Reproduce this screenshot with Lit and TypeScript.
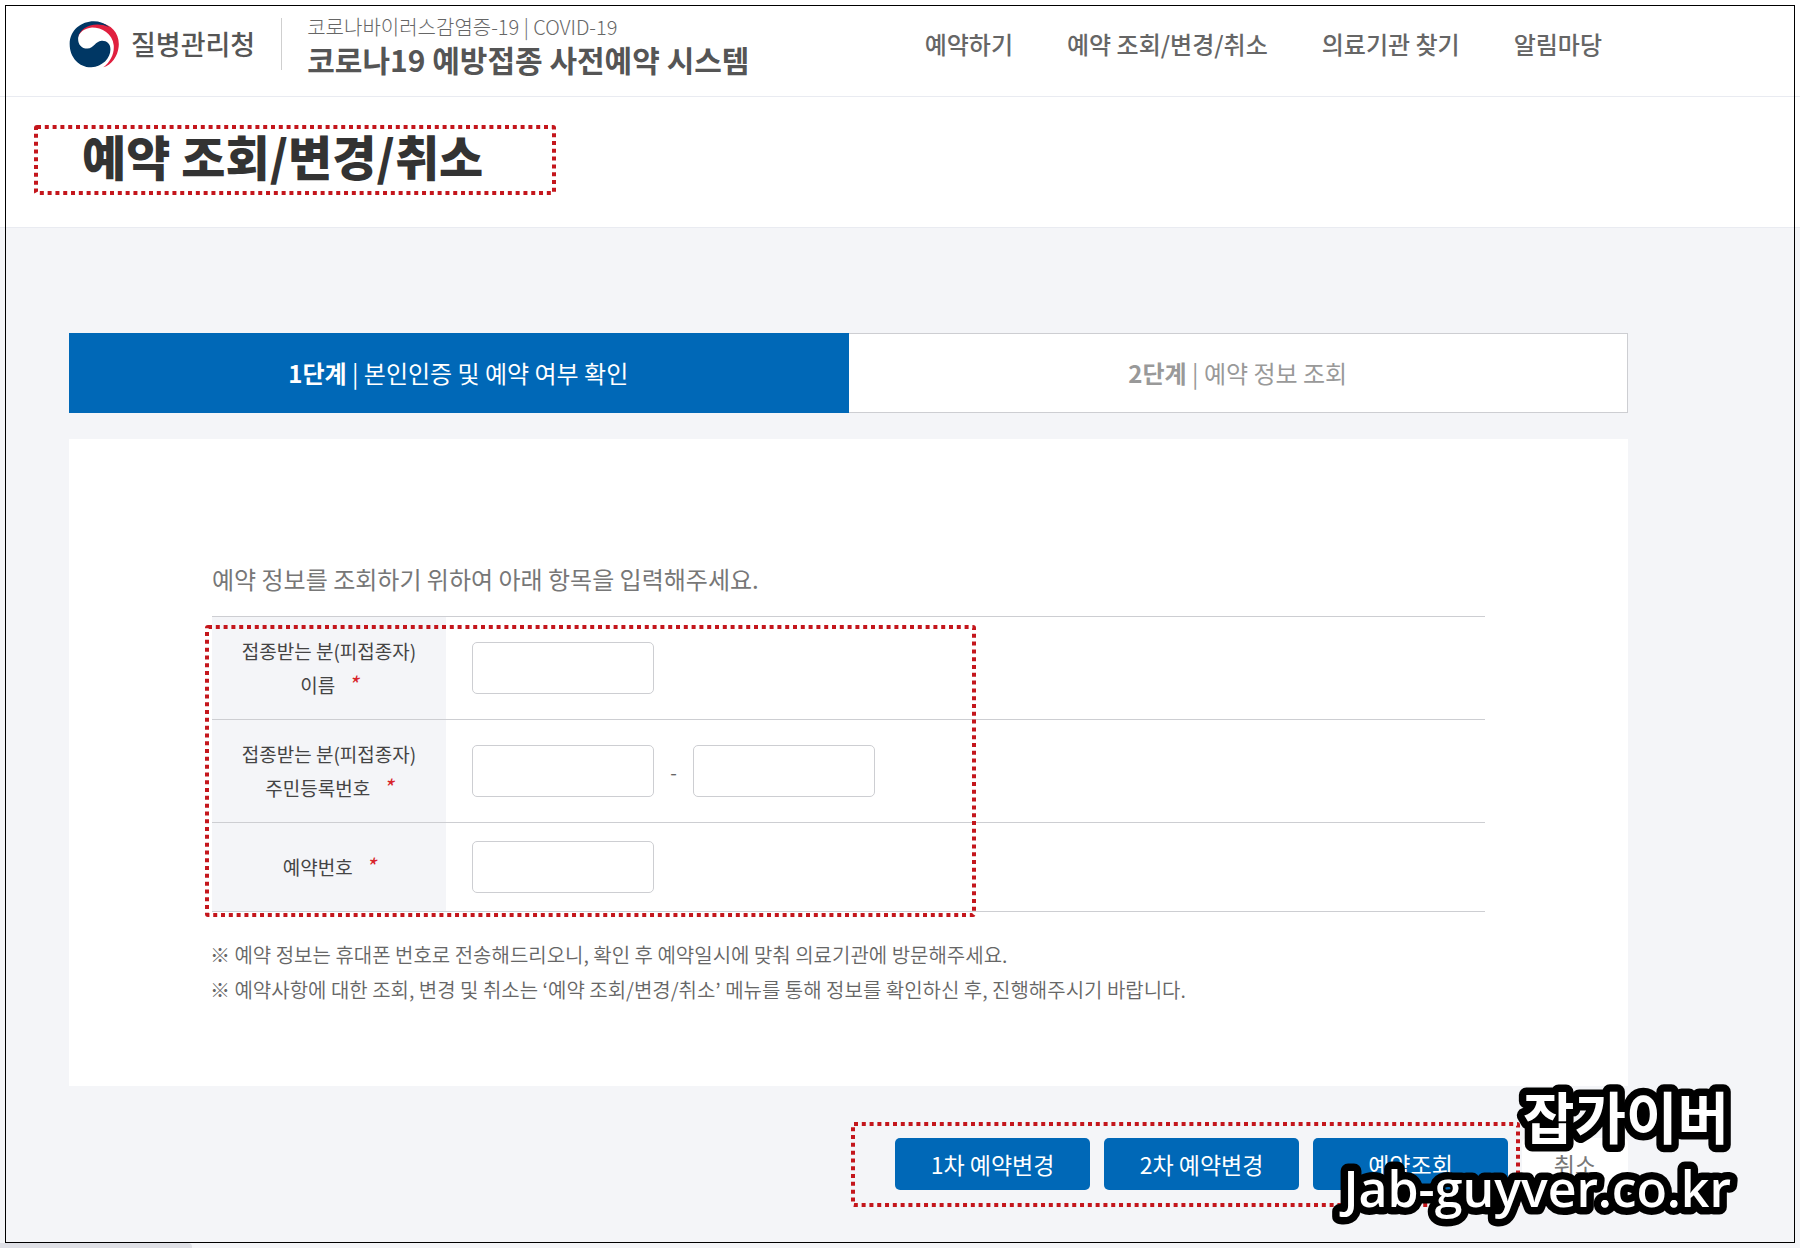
import { LitElement, html, css, svg } from "lit";
import { customElement } from "lit/decorators.js";

const NAV = ["예약하기", "예약 조회/변경/취소", "의료기관 찾기", "알림마당"];

const FIELDS = [
  { id: "name", lines: ["접종받는 분(피접종자)", "이름"], parts: ["이름"] },
  { id: "rrn", lines: ["접종받는 분(피접종자)", "주민등록번호"], parts: ["주민등록번호 앞자리", "주민등록번호 뒷자리"] },
  { id: "code", lines: ["예약번호"], parts: ["예약번호"] },
];

const NOTES = [
  "※ 예약 정보는 휴대폰 번호로 전송해드리오니, 확인 후 예약일시에 맞춰 의료기관에 방문해주세요.",
  "※ 예약사항에 대한 조회, 변경 및 취소는 ‘예약 조회/변경/취소’ 메뉴를 통해 정보를 확인하신 후, 진행해주시기 바랍니다.",
];

const ACTIONS = ["1차 예약변경", "2차 예약변경", "예약조회"];

@customElement("dotted-box")
export class DottedBox extends LitElement {
  static styles = css`
    :host {
      display: block;
      pointer-events: none;
    }
    .line {
      display: block;
      width: 100%;
      height: 100%;
      overflow: visible;
      fill: none;
      stroke: #c4161c;
      stroke-width: 4;
      stroke-dasharray: 4 3.8;
    }
  `;
  render() {
    return html`<svg class="line" aria-hidden="true">${svg`<rect width="100%" height="100%" rx="1"></rect>`}</svg>`;
  }
}

@customElement("app-root")
export class AppRoot extends LitElement {
  static styles = css`
    :host {
      display: block;
      position: relative;
      box-sizing: border-box;
      min-height: 100vh;
      overflow: hidden;
      background: #f4f5f8;
      color: #666;
      font-family: "Noto Sans CJK KR", "Noto Sans", sans-serif;
      --gutter-left: 69px;
      --gutter-right: 172px;
      --blue: #0068b7;
      --line: #cdced2;
    }
    * {
      box-sizing: border-box;
    }
    .frame {
      position: absolute;
      inset: 5px 5px 5px 5px;
      border: 1px solid #000;
      pointer-events: none;
    }
    .scroll {
      position: absolute;
      left: 0;
      bottom: 0;
      width: 192px;
      height: 5px;
      border-top-right-radius: 4px;
      background: #dfe0e6;
    }
    .header {
      display: flex;
      align-items: center;
      height: 97px;
      padding: 0 198px 9px var(--gutter-left);
      border-bottom: 1px solid #e9ebf1;
      background: #fff;
    }
    .logo {
      display: flex;
      align-items: center;
      gap: 12px;
      padding-right: 26px;
      color: #555;
      font-size: 27px;
      font-weight: 500;
      line-height: 52px;
      text-decoration: none;
      border-right: 1px solid #cfcfcf;
    }
    .mark {
      width: 50px;
      height: 50px;
    }
    .system {
      display: flex;
      flex-direction: column;
      padding: 4px 0 0 25px;
    }
    .eyebrow {
      font-size: 20px;
      font-weight: 300;
      line-height: 26px;
    }
    .name {
      color: #555;
      font-size: 30px;
      font-weight: 700;
      line-height: 38px;
    }
    .nav {
      display: flex;
      gap: 54px;
      margin-left: auto;
    }
    .nav a {
      color: #666;
      font-size: 24px;
      font-weight: 500;
      line-height: 36px;
      text-decoration: none;
      white-space: nowrap;
    }
    .hero {
      position: relative;
      height: 131px;
      padding: 26px 82px;
      border-bottom: 1px solid #e9ebf1;
      background: #fff;
    }
    .hero h1 {
      margin: 0;
      color: #333;
      font-size: 48px;
      font-weight: 900;
      line-height: 64px;
    }
    .mark-title {
      position: absolute;
      left: 36px;
      top: 30px;
      width: 518px;
      height: 66px;
    }
    .main {
      padding: 105px var(--gutter-right) 58px var(--gutter-left);
    }
    .steps {
      display: grid;
      grid-template-columns: 1fr 1fr;
      margin: 0 0 26px;
      padding: 0;
      list-style: none;
    }
    .step {
      height: 80px;
      border: 1px solid var(--line);
      border-left: 0;
      background: #fff;
      color: #999;
      font-size: 24px;
      line-height: 78px;
      text-align: center;
    }
    .step.on {
      border-color: var(--blue);
      background: var(--blue);
      color: #fff;
    }
    .step b {
      font-weight: 700;
    }
    .card {
      padding: 120px 143px 79px;
      background: #fff;
    }
    .lead {
      margin: 0 0 17px;
      color: #777;
      font-size: 24px;
      line-height: 40px;
    }
    .form {
      position: relative;
    }
    .table {
      width: 100%;
      border-collapse: separate;
      border-spacing: 0;
      border-top: 1px solid var(--line);
    }
    .table th,
    .table td {
      border-bottom: 1px solid var(--line);
      text-align: center;
    }
    .table th {
      width: 234px;
      padding: 17px 0;
      background: #f4f5f8;
      color: #444;
      font-size: 19px;
      font-weight: 400;
      line-height: 34px;
    }
    .label {
      display: block;
    }
    .req {
      padding-left: 8px;
      color: #d8232a;
      font-size: 22px;
      font-style: italic;
      line-height: 1;
    }
    .table td {
      padding: 18px 26px;
    }
    .inputs {
      display: flex;
      align-items: center;
    }
    .inputs input {
      width: 182px;
      height: 52px;
      padding: 0 12px;
      border: 1px solid var(--line);
      border-radius: 5px;
      background: #fff;
      font: inherit;
      font-size: 19px;
    }
    .dash {
      width: 39px;
      font-size: 19px;
    }
    .mark-form {
      position: absolute;
      left: -5px;
      top: 11px;
      width: 767px;
      height: 288px;
    }
    .notes {
      margin: 25px -2px 0;
      padding: 0;
      list-style: none;
      font-size: 20px;
      font-weight: 350;
      line-height: 35px;
    }
    .actions {
      position: relative;
      display: flex;
      justify-content: flex-end;
      gap: 14px;
      margin-top: 52px;
    }
    .btn {
      width: 195px;
      height: 52px;
      padding: 0;
      border: 0;
      border-radius: 5px;
      background: var(--blue);
      color: #fff;
      font: inherit;
      font-size: 23px;
      line-height: 52px;
    }
    .btn.cancel {
      width: 106px;
      background: #fff;
      color: #777;
    }
    .mark-actions {
      position: absolute;
      right: 110px;
      top: -14px;
      width: 665px;
      height: 81px;
    }
    .watermark {
      position: absolute;
      right: 60px;
      bottom: 8px;
      width: 420px;
      height: 160px;
      overflow: visible;
      fill: #fff;
      stroke: #000;
      stroke-width: 15px;
      stroke-linejoin: round;
      paint-order: stroke fill;
      text-anchor: end;
      pointer-events: none;
    }
    .wm-ko {
      font-size: 56px;
      font-weight: 700;
    }
    .wm-en {
      font-family: "Open Sans", "Noto Sans", sans-serif;
      font-size: 50px;
      font-weight: 600;
    }
  `;

  private logo() {
    return svg`<svg class="mark" viewBox="58 25 152 150" aria-hidden="true">
      <path fill="#e0203f" d="M84 84 C84 54 112 32 148 35 C190 40 213 72 209 108 C206 138 188 162 162 171 C184 154 196 130 194 104 C190 68 158 50 128 50 C104 52 88 66 84 84Z"></path>
      <path fill="#003764" d="M180 49 C140 10 60 36 60 100 C60 142 90 172 126 171 C160 168 184 144 184 116 C184 98 172 89 157 90 C138 92 134 112 114 114 C94 114 84 98 86 80 C90 52 134 28 180 49Z"></path>
    </svg>`;
  }

  render() {
    return html`
      <header class="header">
        <a class="logo" href="#">${this.logo()}<span>질병관리청</span></a>
        <div class="system">
          <span class="eyebrow">코로나바이러스감염증-19 | COVID-19</span>
          <span class="name">코로나19 예방접종 사전예약 시스템</span>
        </div>
        <nav class="nav">${NAV.map((n) => html`<a href="#">${n}</a>`)}</nav>
      </header>
      <section class="hero">
        <h1>예약 조회/변경/취소</h1>
        <dotted-box class="mark-title"></dotted-box>
      </section>
      <main class="main">
        <ol class="steps">
          <li class="step on"><b>1단계</b> | 본인인증 및 예약 여부 확인</li>
          <li class="step"><b>2단계</b> | 예약 정보 조회</li>
        </ol>
        <section class="card">
          <p class="lead">예약 정보를 조회하기 위하여 아래 항목을 입력해주세요.</p>
          <div class="form">
            <table class="table">
              <tbody>
                ${FIELDS.map(
                  (f) => html`<tr>
                    <th scope="row">
                      <label class="label" for="${f.id}-0">
                        ${f.lines.map((l, i) => html`${i ? html`<br />` : ""}${l}`)}
                        <span class="req">*</span>
                      </label>
                    </th>
                    <td>
                      <div class="inputs">
                        ${f.parts.map(
                          (p, i) => html`${i ? html`<span class="dash">-</span>` : ""}<input
                              id="${f.id}-${i}"
                              type="text"
                              aria-label=${p}
                            />`
                        )}
                      </div>
                    </td>
                  </tr>`
                )}
              </tbody>
            </table>
            <dotted-box class="mark-form"></dotted-box>
          </div>
          <ul class="notes">
            ${NOTES.map((n) => html`<li>${n}</li>`)}
          </ul>
        </section>
        <div class="actions">
          ${ACTIONS.map((a) => html`<button class="btn" type="button">${a}</button>`)}
          <button class="btn cancel" type="button">취소</button>
          <dotted-box class="mark-actions"></dotted-box>
        </div>
      </main>
      <div class="scroll"></div>
      <div class="frame"></div>
      <svg class="watermark" viewBox="0 0 420 160">
        <text class="wm-ko" x="409" y="59">잡가이버</text>
        <text class="wm-en" x="411" y="127">Jab-guyver.co.kr</text>
      </svg>
    `;
  }
}
